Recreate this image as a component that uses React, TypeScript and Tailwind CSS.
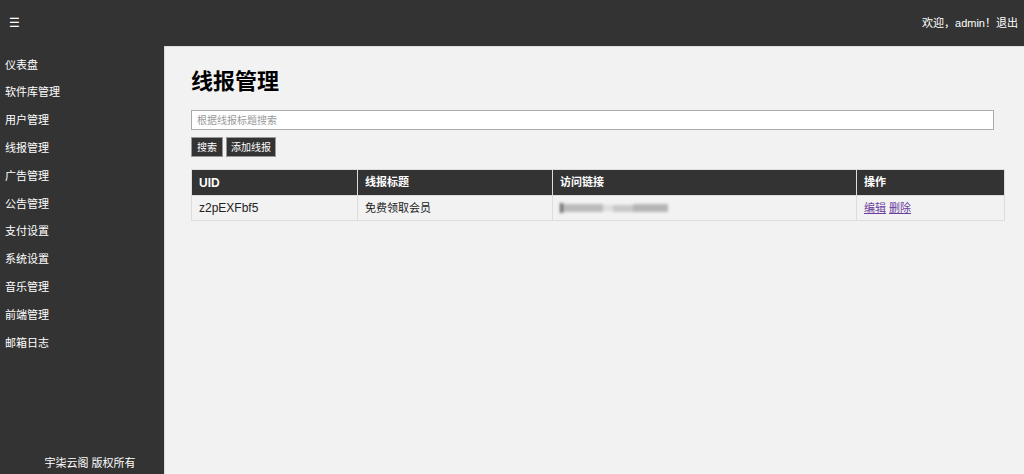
const menu = [
  '仪表盘',
  '软件库管理',
  '用户管理',
  '线报管理',
  '广告管理',
  '公告管理',
  '支付设置',
  '系统设置',
  '音乐管理',
  '前端管理',
  '邮箱日志',
];

const App = () => {
  return (
    <div
      className="h-screen flex flex-col overflow-hidden text-[11px] text-[#222]"
      style={{ fontFamily: '"Liberation Sans", "Noto Sans CJK SC", sans-serif' }}
    >
      {/* top bar */}
      <header className="h-[46px] shrink-0 bg-[#333] text-white flex items-center justify-between pl-[9px] pr-[6px]">
        <span className="text-[12px] leading-none">☰</span>
        <span>欢迎，admin！退出</span>
      </header>

      <div className="flex flex-1 min-h-0">
        {/* sidebar */}
        <aside className="w-[164px] shrink-0 bg-[#333] text-white flex flex-col justify-between">
          <ul className="pt-[5px]">
            {menu.map((item) => (
              <li key={item} className="h-[27.8px] flex items-center pl-[5px]">
                {item}
              </li>
            ))}
          </ul>
          <div className="pl-4 pb-[3px] text-center">宇柒云阁 版权所有</div>
        </aside>

        {/* content */}
        <main className="flex-1 bg-[#f2f2f2] border-l border-t border-[#ddd] pl-[26px] pr-[19px] pt-[18px]">
          <h1 className="text-[22px] font-bold text-black leading-[34px] mb-[11px]">线报管理</h1>

          <input
            type="text"
            placeholder="根据线报标题搜索"
            className="block w-[803px] h-[20px] bg-white border border-[#aaa] px-[5px] text-[10px] placeholder:text-[#999] outline-none"
          />

          <div className="flex gap-[3px] mt-[7px]">
            <button className="w-[32px] h-[20px] bg-[#333] text-white text-[10px] border border-[#999]">搜索</button>
            <button className="w-[50px] h-[20px] bg-[#333] text-white text-[10px] border border-[#999]">添加线报</button>
          </div>

          <table className="w-full mt-[12px] border-collapse">
            <thead>
              <tr className="bg-[#333] text-white text-left h-[26px]">
                <th className="w-[166px] pl-[7px] border border-[#ddd] text-[12px]">UID</th>
                <th className="w-[195px] pl-[7px] border border-[#ddd]">线报标题</th>
                <th className="w-[304px] pl-[7px] border border-[#ddd]">访问链接</th>
                <th className="pl-[7px] border border-[#ddd]">操作</th>
              </tr>
            </thead>
            <tbody>
              <tr className="h-[25px] text-[#222]">
                <td className="pl-[7px] border border-[#ddd] text-[12px]">z2pEXFbf5</td>
                <td className="pl-[7px] border border-[#ddd]">免费领取会员</td>
                <td className="pl-[7px] border border-[#ddd]">
                  <div className="flex items-center h-[12px] w-[108px] blur-[1.5px]">
                    <span className="w-[3px] h-[10px] bg-[#666]" />
                    <span className="w-[40px] h-[8px] bg-[#bbb]" />
                    <span className="w-[10px] h-[6px] bg-[#ddd]" />
                    <span className="w-[20px] h-[7px] bg-[#c8c8c8]" />
                    <span className="w-[35px] h-[8px] bg-[#b5b5b5]" />
                  </div>
                </td>
                <td className="pl-[7px] border border-[#ddd]">
                  <a href="#" className="underline text-[#6b3fa0]">编辑</a>{' '}
                  <a href="#" className="underline text-[#6b3fa0]">删除</a>
                </td>
              </tr>
            </tbody>
          </table>
        </main>
      </div>
    </div>
  );
};

export default App;
